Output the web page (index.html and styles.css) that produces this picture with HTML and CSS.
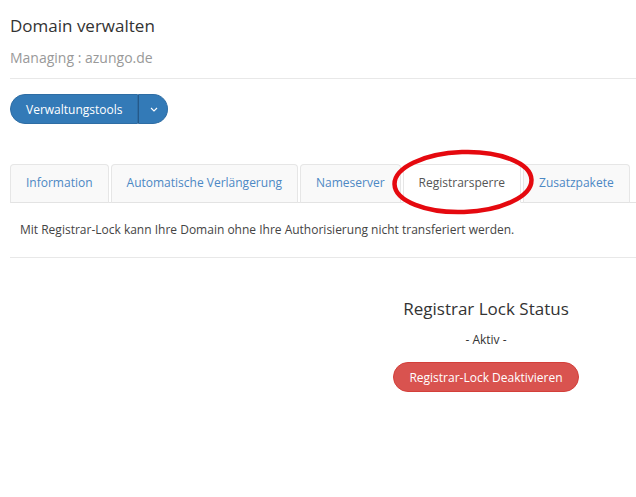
FILE: index.html
```html
<!DOCTYPE html>
<html lang="de">
<head>
  <meta charset="UTF-8">
  <meta name="viewport" content="width=device-width, initial-scale=1.0">
  <title>Domain verwalten</title>
  <link rel="stylesheet" href="styles.css">
</head>
<body>
  <div class="page">
    <h1>Domain verwalten</h1>
    <p class="managing">Managing : azungo.de</p>
    <hr class="rule">

    <div class="btn-group">
      <button class="btn-main">Verwaltungstools</button>
      <button class="btn-caret">
        <svg width="8" height="5" viewBox="0 0 8 5"><polyline points="1,1 4,4 7,1" fill="none" stroke="#fff" stroke-width="1.1"/></svg>
      </button>
    </div>

    <div class="tabs-wrap">
      <ul class="tabs">
        <li><a>Information</a></li>
        <li><a>Automatische Verlängerung</a></li>
        <li><a>Nameserver</a></li>
        <li class="active"><a>Registrarsperre</a></li>
        <li><a>Zusatzpakete</a></li>
      </ul>
      <svg class="circle" width="150" height="72" viewBox="0 0 150 72">
        <ellipse cx="75" cy="36" rx="68.5" ry="30" fill="none" stroke="#e5090f" stroke-width="4.5" transform="rotate(-2 75 36)"/>
      </svg>
    </div>

    <div class="tab-content">
      <p>Mit Registrar-Lock kann Ihre Domain ohne Ihre Authorisierung nicht transferiert werden.</p>
    </div>
    <hr class="rule">

    <div class="status-row">
      <div></div>
      <div class="status">
        <h3>Registrar Lock Status</h3>
        <p class="state">- Aktiv -</p>
        <button class="btn-danger">Registrar-Lock Deaktivieren</button>
      </div>
    </div>
  </div>
</body>
</html>
```

FILE: styles.css
```css
body {
  margin: 0;
  font-family: "Open Sans", "Liberation Sans", sans-serif;
  color: #333;
  background: #fff;
}
.page {
  padding-left: 10px;
}
h1 {
  font-size: 17px;
  font-weight: 400;
  line-height: 20px;
  margin: 16px 0 0;
}
.managing {
  font-size: 14px;
  color: #999;
  line-height: 20px;
  margin: 12px 0 0;
}
.rule {
  border: 0;
  border-top: 1px solid #e8e8e8;
  margin: 10px 0 0;
}
.btn-group {
  display: inline-flex;
  margin-top: 15px;
}
.btn-group button {
  font-family: inherit;
  font-size: 12px;
  color: #fff;
  background: #337ab7;
  border: 1px solid #2e6da4;
  height: 30px;
  cursor: pointer;
}
.btn-main {
  padding: 0 14px 0 15px;
  border-radius: 15px 0 0 15px;
}
.btn-caret {
  width: 30px;
  padding: 0 0 0 2px;
  border-left: 1px solid #24598a !important;
  border-radius: 0 15px 15px 0;
  display: flex;
  align-items: center;
  justify-content: center;
}
.tabs-wrap {
  position: relative;
  margin-top: 40px;
}
.tabs {
  list-style: none;
  margin: 0;
  padding: 0;
  display: flex;
  border-bottom: 1px solid #e3e3e3;
}
.tabs li {
  margin-right: 2px;
  margin-bottom: -1px;
}
.tabs a {
  display: block;
  font-size: 12px;
  line-height: 18px;
  padding: 9px 15px 10px;
  color: #4c88c4;
  background: #f9f9f9;
  border: 1px solid #e6e6e6;
  border-bottom-color: #e3e3e3;
  border-radius: 4px 4px 0 0;
}
.tabs .active a {
  color: #555;
  background: #fff;
  border-bottom-color: transparent;
}
.circle {
  position: absolute;
  left: 378px;
  top: -18px;
}
.tab-content {
  padding: 10px 10px 0;
}
.tab-content p {
  font-size: 12px;
  line-height: 18px;
  color: #444;
  margin: 8px 0 18px;
}
.status-row {
  display: grid;
  grid-template-columns: 326px 1fr;
}
.status {
  text-align: center;
}
.status h3 {
  font-size: 17px;
  font-weight: 400;
  line-height: 20px;
  margin: 41px 0 0;
}
.state {
  font-size: 12px;
  line-height: 18px;
  margin: 12px 0 0;
}
.btn-danger {
  font-family: inherit;
  font-size: 12px;
  color: #fff;
  background: #d9534f;
  border: 1px solid #d43f3a;
  border-radius: 15px;
  height: 30px;
  padding: 0 15px;
  margin-top: 13px;
}
```
